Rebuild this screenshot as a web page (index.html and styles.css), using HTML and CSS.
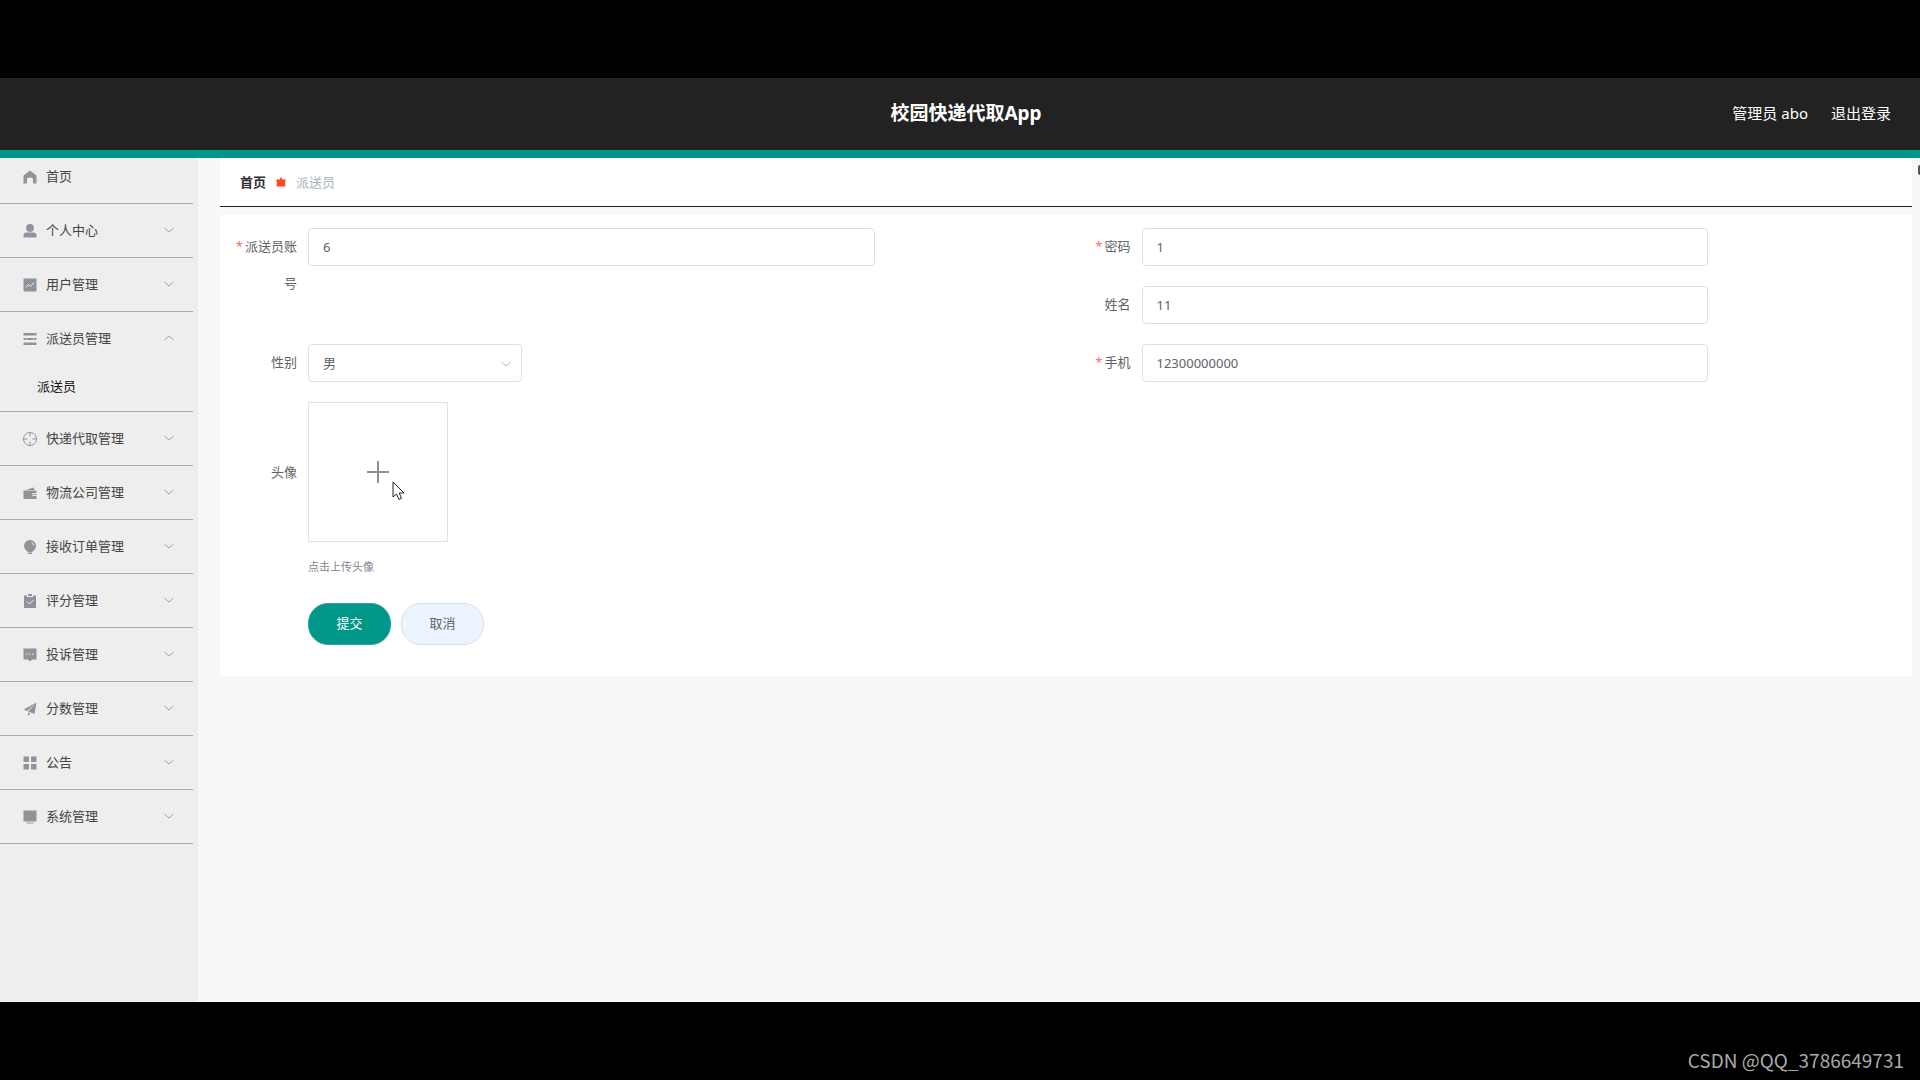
FILE: index.html
```html
<!DOCTYPE html>
<html lang="zh-CN">
<head>
<meta charset="utf-8">
<meta name="viewport" content="width=device-width, initial-scale=1">
<title>校园快递代取App</title>
<link rel="stylesheet" href="styles.css">
</head>
<body>
<svg class="sprite" aria-hidden="true">
  <symbol id="down" viewBox="0 0 10 10"><path d="M0.5 3 5 7 9.5 3" fill="none" stroke="currentColor"/></symbol>
  <symbol id="up" viewBox="0 0 10 10"><path d="M0.5 7 5 3 9.5 7" fill="none" stroke="currentColor"/></symbol>
</svg>
<header class="header">
  <h1 class="title">校园快递代取App</h1>
  <nav class="account">
    <span>管理员 abo</span>
    <a href="#logout">退出登录</a>
  </nav>
</header>
<div class="app">
  <aside class="sidebar">
    <ul class="menu">
      <li class="item home"><a class="row" href="#home"><svg class="icon" viewBox="0 0 14 14"><path d="M7 0.5 13.5 5.5V13.5H10V9.5Q10 7.5 7 7.5T4 9.5V13.5H0.5V5.5Z"/></svg><span class="name">首页</span></a></li>
      <li class="item"><button class="row" type="button"><svg class="icon" viewBox="0 0 14 14"><circle cx="7" cy="3.9" r="3.9"/><path d="M0.5 13.5V11Q0.5 8.5 3.5 8.5H10.5Q13.5 8.5 13.5 11V13.5Z"/></svg><span class="name">个人中心</span><svg class="arrow"><use href="#down"/></svg></button></li>
      <li class="item"><button class="row" type="button"><svg class="icon" viewBox="0 0 14 14"><rect x="0.5" y="0.5" width="13" height="13" rx="1"/><path class="cut" d="M3 9.5 5.5 6.5 7.5 8.5 11 4.5"/></svg><span class="name">用户管理</span><svg class="arrow"><use href="#down"/></svg></button></li>
      <li class="item"><button class="row" type="button" aria-expanded="true"><svg class="icon" viewBox="0 0 14 14"><path d="M0.5 1H13.5V3.5H0.5ZM0.5 6H3V8H0.5ZM3.5 6H10.5V8H3.5ZM11 6H13.5V8H11ZM0.5 10.5H13.5V13H0.5Z"/></svg><span class="name">派送员管理</span><svg class="arrow"><use href="#up"/></svg></button>
        <a class="sub" href="#courier">派送员</a></li>
      <li class="item"><button class="row" type="button"><svg class="icon" viewBox="0 0 14 14"><path class="line" d="M7 0.5A6.5 6.5 0 1 1 6.99 0.5M7 0.5V4.5M7 9.5V13.5M0.5 7H4.5M9.5 7H13.5"/></svg><span class="name">快递代取管理</span><svg class="arrow"><use href="#down"/></svg></button></li>
      <li class="item"><button class="row" type="button"><svg class="icon" viewBox="0 0 14 14"><path d="M3 4 10.5 1.5 11.5 4ZM0.5 4.5H13.5V7H9.5V10H13.5V13H0.5Z"/><path d="M10.5 8H13.5V9H10.5Z"/></svg><span class="name">物流公司管理</span><svg class="arrow"><use href="#down"/></svg></button></li>
      <li class="item"><button class="row" type="button"><svg class="icon" viewBox="0 0 14 14"><path d="M7 0A6 6 0 0 1 13 6Q13 9 9 12H5Q1 9 1 6A6 6 0 0 1 7 0ZM5 12.5H9V14H5Z"/><path class="cut" d="M8.5 2.5Q10.5 3.5 10.8 5.5"/></svg><span class="name">接收订单管理</span><svg class="arrow"><use href="#down"/></svg></button></li>
      <li class="item"><button class="row" type="button"><svg class="icon" viewBox="0 0 14 14"><path d="M1 1.5H4V3H10V1.5H13V14H1ZM5 0H9V2H5Z"/><path class="cut" d="M4 7.5 6.5 10 10.5 6"/></svg><span class="name">评分管理</span><svg class="arrow"><use href="#down"/></svg></button></li>
      <li class="item"><button class="row" type="button"><svg class="icon" viewBox="0 0 14 14"><path d="M0.5 0.5H13.5V11.5H9L7 13.5 5 11.5H0.5Z"/><path class="cut" d="M3 6H4.5M6 6H7.5M9 6H10.5"/></svg><span class="name">投诉管理</span><svg class="arrow"><use href="#down"/></svg></button></li>
      <li class="item"><button class="row" type="button"><svg class="icon" viewBox="0 0 14 14"><path d="M13.5 0.5 0.5 7.5 4 9ZM13.5 0.5 5 9.5 11.5 12ZM5 10.5 7.5 11.5 5 14Z"/></svg><span class="name">分数管理</span><svg class="arrow"><use href="#down"/></svg></button></li>
      <li class="item"><button class="row" type="button"><svg class="icon" viewBox="0 0 14 14"><path d="M0.5 0.5H6V6H0.5ZM8 0.5H13.5V6H8ZM0.5 8H6V13.5H0.5ZM8 8H13.5V13.5H8Z"/></svg><span class="name">公告</span><svg class="arrow"><use href="#down"/></svg></button></li>
      <li class="item"><button class="row" type="button"><svg class="icon" viewBox="0 0 14 14"><path d="M0.5 0.5H13.5V11.5H0.5ZM3.5 12.5H10.5V13.5H3.5Z"/></svg><span class="name">系统管理</span><svg class="arrow"><use href="#down"/></svg></button></li>
    </ul>
  </aside>
  <main class="content">
    <nav class="crumbs">
      <a class="crumb-home" href="#home">首页</a>
      <svg class="star" viewBox="0 0 10 10"><path d="M5 0 6.5 2.5H10L9 5.5 9.5 9.5H0.5L1 5.5 0 2.5H3.5Z"/></svg>
      <span class="crumb-now">派送员</span>
    </nav>
    <form class="form">
      <div class="field tall"><label class="label required" for="account">派送员账号</label><input class="input" id="account" value="6"></div>
      <div class="field"><label class="label required" for="password">密码</label><input class="input" id="password" value="1"></div>
      <div class="field"><label class="label" for="name">姓名</label><input class="input" id="name" value="11"></div>
      <div class="field"><label class="label" for="gender">性别</label>
        <div class="select-box"><select class="input select" id="gender"><option>男</option><option>女</option></select><svg class="select-arrow"><use href="#down"/></svg></div></div>
      <div class="field"><label class="label required" for="phone">手机</label><input class="input" id="phone" value="12300000000"></div>
      <div class="field wide middle"><label class="label" for="avatar">头像</label>
        <button class="upload" id="avatar" type="button" aria-label="上传头像">
          <svg class="plus" viewBox="0 0 22 22"><path d="M11 0V22M0 11H22"/></svg>
          <svg class="cursor" viewBox="0 0 13 20"><path d="M1 1V16L4.5 13 7 18.5 9.5 17.3 7.2 12H12Z"/></svg>
        </button></div>
      <p class="hint wide">点击上传头像</p>
      <div class="actions wide"><button class="btn primary" type="submit">提交</button><button class="btn" type="button">取消</button></div>
    </form>
    <span class="edge-dot"></span>
  </main>
</div>
<footer class="footer">CSDN @QQ_3786649731</footer>
</body>
</html>
```
FILE: styles.css
```css
* { box-sizing: border-box; }

body {
  margin: 0;
  min-height: 100vh;
  padding-top: 78px;
  display: flex;
  flex-direction: column;
  overflow-x: hidden;
  background: #000;
  color: #606266;
  font: 13px/20px "Noto Sans", "Noto Sans CJK SC", sans-serif;
}

a { color: inherit; text-decoration: none; }

button, input, select { font: inherit; color: inherit; }

.sprite { position: absolute; width: 0; height: 0; }

.header {
  display: grid;
  grid-template-columns: 1fr auto 1fr;
  align-items: center;
  height: 80px;
  padding: 0 29px 2px 41px;
  border-bottom: 8px solid #009688;
  background: #222;
  color: #fff;
}

.title {
  grid-column: 2;
  margin: 0;
  font-size: 19px;
  line-height: 28px;
}

.account {
  display: flex;
  justify-content: flex-end;
  gap: 23px;
  font-size: 15px;
}

.app {
  flex: 1;
  display: flex;
  background: #f7f8fa;
}

.sidebar {
  flex: none;
  width: 198px;
  padding-right: 5px;
  background: #eee;
}

.menu {
  margin: 0;
  padding: 0;
  list-style: none;
}

.item { border-bottom: 1px solid #aaa; }

.home { padding-bottom: 7px; }

.row {
  display: flex;
  align-items: center;
  gap: 9px;
  width: 100%;
  height: 53px;
  padding: 0 19px 0 23px;
  border: 0;
  background: none;
  color: #444;
  text-align: left;
}

.home .row { height: 38px; }

.icon {
  flex: none;
  width: 14px;
  height: 14px;
  fill: #909399;
}

.icon .cut { fill: none; stroke: #eee; }
.icon .line { fill: none; stroke: #909399; }

.name { flex: 1; padding-bottom: 2px; }

.arrow {
  width: 10px;
  height: 12px;
  padding-bottom: 2px;
  color: #a0a3a8;
}

.sub {
  display: block;
  padding: 11px 0 15px 37px;
  color: #111;
}

.content {
  position: relative;
  flex: 1;
  min-width: 0;
  padding: 0 8px 0 22px;
}

.crumbs {
  display: flex;
  align-items: center;
  gap: 10px;
  height: 49px;
  padding-left: 20px;
  border-bottom: 1px solid #222;
  background: #fff;
}

.crumb-home { color: #303133; font-weight: 700; }
.crumb-now { color: #a8b0c2; }

.star { width: 10px; height: 10px; fill: #ff4a1c; }

.form {
  display: grid;
  grid-template-columns: 1fr 1fr;
  row-gap: 20px;
  margin-top: 8px;
  padding: 13px 12px 31px 13px;
  background: #fff;
}

.field { display: flex; align-items: flex-start; }
.tall { grid-row: span 2; }
.wide { grid-column: 1 / -1; }
.middle { align-items: center; }

.label {
  flex: none;
  width: 75px;
  padding-right: 11px;
  line-height: 37px;
  text-align: right;
}

.required::before {
  content: "*";
  margin-right: 2px;
  color: #f56c6c;
}

.input {
  width: 68%;
  height: 38px;
  padding: 0 14px 1px;
  border: 1px solid #dcdfe6;
  border-radius: 4px;
  background: #fff;
}

.select-box { position: relative; width: 214px; }

.select { width: 100%; appearance: none; }

.select-arrow {
  position: absolute;
  right: 11px;
  top: 15px;
  width: 10px;
  height: 10px;
  color: #b4b8c0;
  pointer-events: none;
}

.upload {
  position: relative;
  display: grid;
  place-items: center;
  width: 140px;
  height: 140px;
  padding: 0;
  border: 1px solid #dcdfe6;
  background: #fff;
}

.plus { width: 22px; height: 22px; fill: none; stroke: #8c8f94; stroke-width: 2; }

.cursor {
  position: absolute;
  left: 83px;
  top: 78px;
  width: 13px;
  height: 20px;
  fill: #fff;
  stroke: #222;
}

.hint {
  margin: -5px 0 0 75px;
  color: #808691;
  font-size: 11px;
}

.actions {
  display: flex;
  gap: 10px;
  margin: 6px 0 0 75px;
}

.btn {
  width: 83px;
  height: 42px;
  padding: 0 0 2px;
  border: 1px solid #dcdfe6;
  border-radius: 20px;
  background: #ecf5ff;
}

.primary { border-color: #2ba3b0; background: #009688; color: #fff; }

.edge-dot {
  position: absolute;
  top: 7px;
  right: 0;
  width: 2px;
  height: 10px;
  border-radius: 2px 0 0 2px;
  background: #555;
}

.footer {
  display: flex;
  align-items: center;
  justify-content: flex-end;
  height: 78px;
  padding: 38px 16px 0 0;
  color: #aaa;
  font: 19px/24px "Noto Sans CJK SC", sans-serif;
}
```
